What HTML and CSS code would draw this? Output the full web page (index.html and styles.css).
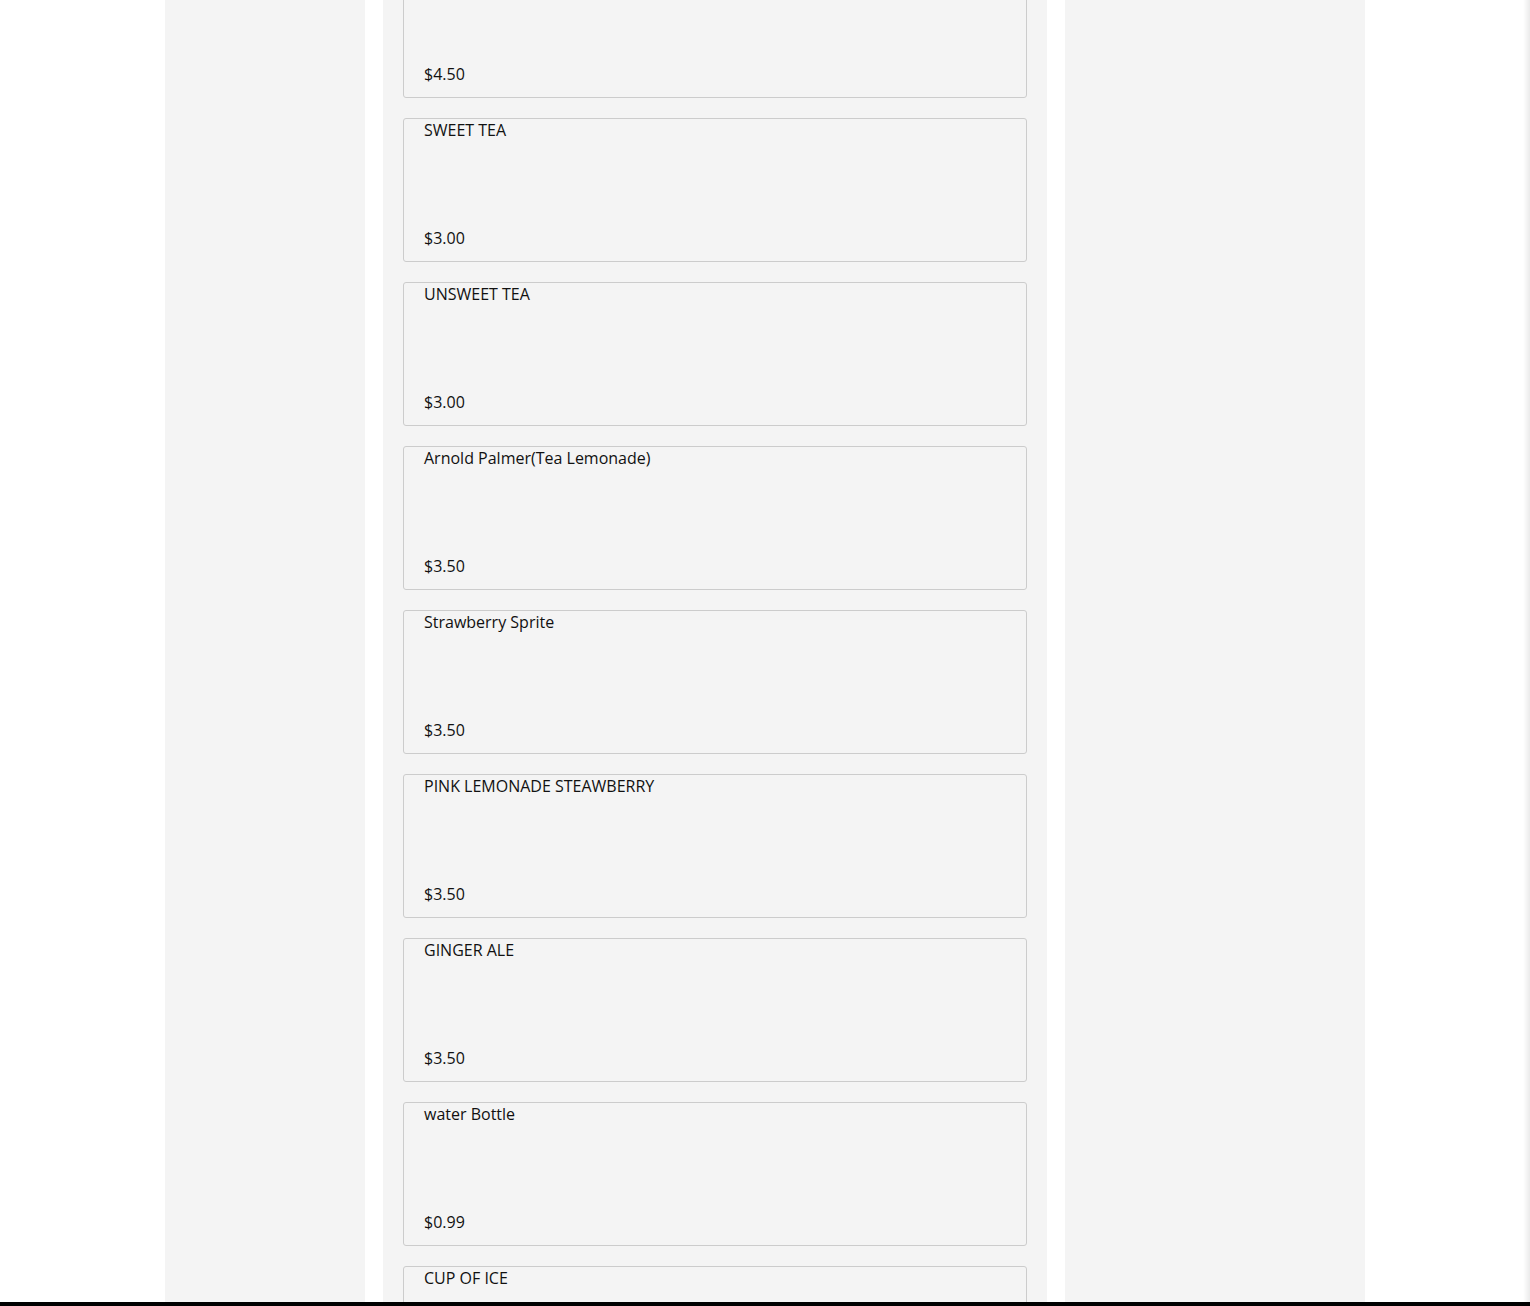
FILE: index.html
```html
<!DOCTYPE html>
<html lang="en">
<head>
<meta charset="utf-8">
<title>Menu</title>
<link rel="stylesheet" href="styles.css">
</head>
<body>
<div class="page">
  <aside class="col col-left"></aside>
  <main class="col col-center">
    <div class="list">
      <div class="item"><div class="name"></div><div class="price">$4.50</div></div>
      <div class="item"><div class="name">SWEET TEA</div><div class="price">$3.00</div></div>
      <div class="item"><div class="name">UNSWEET TEA</div><div class="price">$3.00</div></div>
      <div class="item"><div class="name">Arnold Palmer(Tea Lemonade)</div><div class="price">$3.50</div></div>
      <div class="item"><div class="name">Strawberry Sprite</div><div class="price">$3.50</div></div>
      <div class="item"><div class="name">PINK LEMONADE STEAWBERRY</div><div class="price">$3.50</div></div>
      <div class="item"><div class="name">GINGER ALE</div><div class="price">$3.50</div></div>
      <div class="item"><div class="name">water Bottle</div><div class="price">$0.99</div></div>
      <div class="item"><div class="name">CUP OF ICE</div><div class="price"></div></div>
    </div>
  </main>
  <aside class="col col-right"></aside>
</div>
<div class="bottom-bar"></div>
<div class="edge-shade"></div>
</body>
</html>
```

FILE: styles.css
```css
html, body {
  margin: 0;
  padding: 0;
  height: 1306px;
  overflow: hidden;
  background: #ffffff;
}

body {
  font-family: "Open Sans", "Liberation Sans", sans-serif;
  color: #111111;
}

.page {
  width: 1200px;
  margin: 0 auto;
  display: flex;
  gap: 18px;
  height: 1306px;
}

.col {
  background: #f4f4f4;
  height: 100%;
}

.col-left {
  width: 200px;
  flex: none;
}

.col-center {
  width: 664px;
  flex: none;
  padding: 0 20px;
  box-sizing: border-box;
  overflow: hidden;
}

.col-right {
  width: 300px;
  flex: none;
}

.list {
  display: flex;
  flex-direction: column;
  gap: 20px;
  margin-top: -46px;
}

.item {
  height: 144px;
  box-sizing: border-box;
  border: 1px solid #cccccc;
  border-radius: 3px;
  background: #f4f4f4;
  padding: 1px 20px 13px 20px;
  display: flex;
  flex-direction: column;
  justify-content: space-between;
  font-size: 16px;
  line-height: 20px;
}

.name {
  font-weight: 400;
  min-height: 20px;
}

.price {
  font-weight: 500;
  min-height: 20px;
}

.bottom-bar {
  position: fixed;
  left: 0;
  right: 0;
  bottom: 0;
  height: 4px;
  background: #000;
}

.edge-shade {
  position: fixed;
  top: 0;
  right: 0;
  bottom: 4px;
  width: 7px;
  background: linear-gradient(to right, rgba(0,0,0,0), rgba(0,0,0,0.08));
}
```
